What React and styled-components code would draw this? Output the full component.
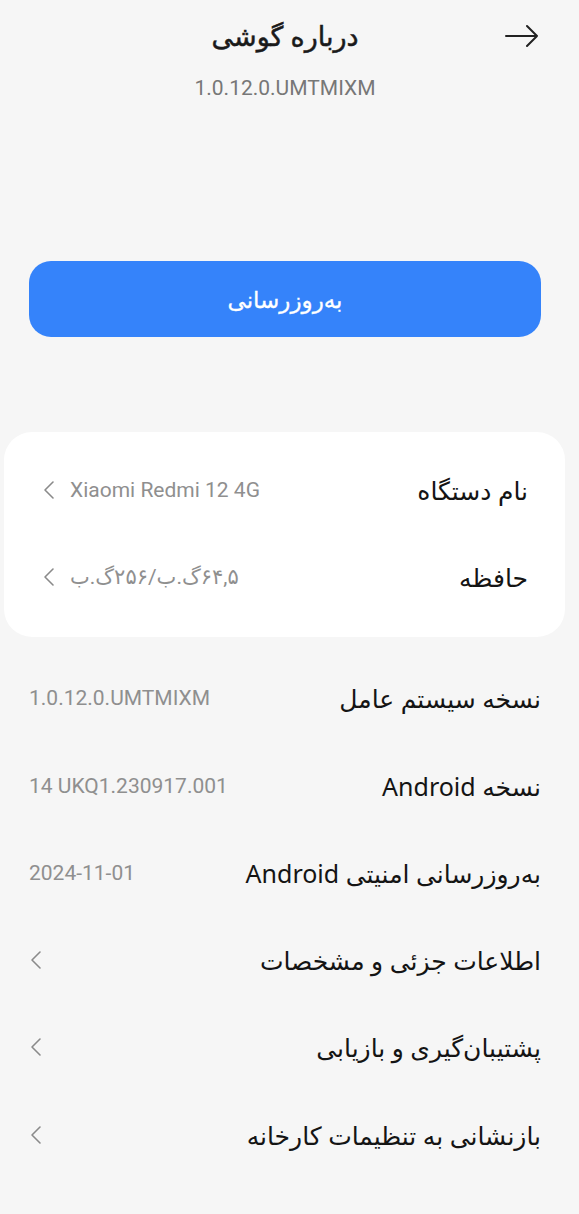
import React from "react";
import styled, { createGlobalStyle } from "styled-components";

const Global = createGlobalStyle`
  html, body { margin: 0; padding: 0; background: #f6f6f6; }
  body { font-family: "Noto Sans", "DejaVu Sans", sans-serif; }
`;

const Page = styled.div`
  direction: rtl;
  width: 579px;
  min-height: 1214px;
  background: #f6f6f6;
  display: flex;
  flex-direction: column;
`;

const Header = styled.header`
  display: grid;
  grid-template-columns: 1fr auto 1fr;
  align-items: center;
  padding: 18px 39px 0 30px;
`;

const BackButton = styled.button`
  justify-self: start;
  width: 36px;
  height: 36px;
  padding: 0;
  border: 0;
  background: none;
  color: #222;
  display: flex;
  align-items: center;
  justify-content: center;
`;

const Title = styled.h1`
  margin: 0;
  font-size: 27px;
  line-height: 36px;
  font-weight: 400;
  -webkit-text-stroke: 0.5px #1a1a1a;
  color: #1a1a1a;
`;

const Subtitle = styled.div`
  margin-top: 19px;
  padding-right: 9px;
  text-align: center;
  font-family: Roboto, "Noto Sans", sans-serif;
  font-size: 21px;
  line-height: 30px;
  color: #777;
  direction: ltr;
`;

const UpdateButton = styled.button`
  margin: 158px 38px 0 29px;
  height: 76px;
  border: 0;
  border-radius: 22px;
  background: #3583fa;
  color: #fff;
  font-family: "Noto Sans", "DejaVu Sans", sans-serif;
  font-size: 23px;
  font-weight: 400;
  -webkit-text-stroke: 0.3px #fff;
`;

const Card = styled.section`
  margin: 95px 14px 0 4px;
  padding: 14px 37px 16px 38px;
  background: #fff;
  border-radius: 28px;
`;

const List = styled.section`
  margin-top: 18px;
  padding: 0 38px 0 29px;
`;

const Row = styled.div`
  height: 87.3px;
  display: flex;
  align-items: center;
  justify-content: space-between;
`;

const Label = styled.span`
  font-size: 25px;
  font-weight: 400;
  color: #141414;
  white-space: nowrap;
`;

const Value = styled.span`
  display: flex;
  align-items: center;
  gap: 14px;
  font-family: Roboto, "Noto Sans", "DejaVu Sans", sans-serif;
  font-size: 21px;
  color: #8f8f8f;
  direction: ltr;
  white-space: nowrap;
`;

const Chevron = () => (
  <svg width="14" height="22" viewBox="0 0 14 22" fill="none">
    <path d="M11 3 L3 11 L11 19" stroke="#8a8a8a" strokeWidth="1.6" strokeLinecap="round" strokeLinejoin="round" />
  </svg>
);

const Arrow = () => (
  <svg width="36" height="24" viewBox="0 0 36 24" fill="none">
    <path d="M2 12 H33 M23 2 L33 12 L23 22" stroke="#222" strokeWidth="2" strokeLinecap="round" strokeLinejoin="round" />
  </svg>
);

const cardRows = [
  { label: "نام دستگاه", value: "Xiaomi Redmi 12 4G" },
  { label: "حافظه", value: "۶۴,۵گ.ب/۲۵۶گ.ب", rtlValue: true },
];

const infoRows = [
  { label: "نسخه سیستم عامل", value: "1.0.12.0.UMTMIXM" },
  { label: "نسخه Android", value: "14 UKQ1.230917.001" },
  { label: "به‌روزرسانی امنیتی Android", value: "2024-11-01" },
  { label: "اطلاعات جزئی و مشخصات", chevron: true },
  { label: "پشتیبان‌گیری و بازیابی", chevron: true },
  { label: "بازنشانی به تنظیمات کارخانه", chevron: true },
];

export default function App() {
  return (
    <>
      <Global />
      <Page>
        <Header>
          <BackButton aria-label="back">
            <Arrow />
          </BackButton>
          <Title>درباره گوشی</Title>
          <span />
        </Header>
        <Subtitle>1.0.12.0.UMTMIXM</Subtitle>

        <UpdateButton>به‌روزرسانی</UpdateButton>

        <Card>
          {cardRows.map((r) => (
            <Row key={r.label}>
              <Label>{r.label}</Label>
              <Value>
                <Chevron />
                <span dir={r.rtlValue ? "rtl" : "ltr"}>{r.value}</span>
              </Value>
            </Row>
          ))}
        </Card>

        <List>
          {infoRows.map((r) => (
            <Row key={r.label}>
              <Label>{r.label}</Label>
              <Value>
                {r.chevron && <Chevron />}
                {r.value && <span>{r.value}</span>}
              </Value>
            </Row>
          ))}
        </List>
      </Page>
    </>
  );
}
